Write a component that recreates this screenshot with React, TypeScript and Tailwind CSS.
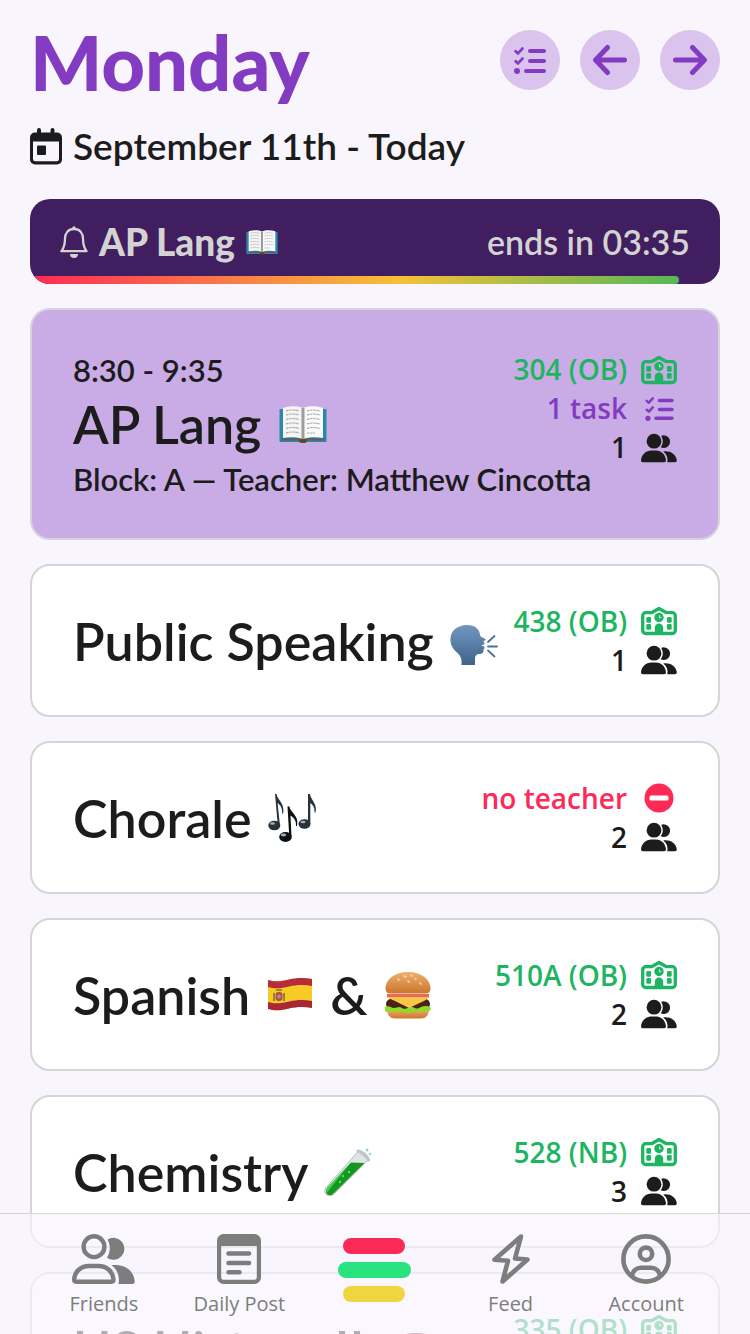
import React from "react";

type IconProps = { className?: string };

const HEAD = "font-['Lato','Liberation_Sans',sans-serif]";
const BODY = "font-['Open_Sans','Liberation_Sans',sans-serif]";

/* ---------- line icons ---------- */

function TasksIcon({ className }: IconProps) {
  return (
    <svg viewBox="0 0 32 27" fill="none" stroke="currentColor" strokeLinecap="round" strokeLinejoin="round" className={className} aria-hidden="true">
      <path d="M1.6 4.3 4 6.4 8.4 1.6M1.6 14.3 4 16.4 8.4 11.6" strokeWidth="2.8" />
      <path d="M16 4h14M16 14h14M12 24h18" strokeWidth="4" />
      <circle cx="3" cy="24" r="3" fill="currentColor" stroke="none" />
    </svg>
  );
}

function ArrowIcon({ className }: IconProps) {
  return (
    <svg viewBox="0 0 36 32" fill="none" stroke="currentColor" strokeWidth="5" strokeLinecap="round" strokeLinejoin="round" className={className} aria-hidden="true">
      <path d="M15.500 3.500 3.600 16 15.500 28.500M3.600 16H32.500" />
    </svg>
  );
}

function BellIcon({ className }: IconProps) {
  return (
    <svg viewBox="0 0 28 32" fill="none" stroke="currentColor" className={className} aria-hidden="true">
      <path d="M14 3C8 3 5 7.500 5 12.500c0 6-1 9.500-3.600 12.700h25.200C24 22 23 18.500 23 12.500 23 7.500 20 3 14 3Z" strokeWidth="2.300" strokeLinejoin="round" />
      <path d="M12.200 3.500V2a1.800 1.800 0 0 1 3.600 0v1.500ZM10 28h8a4 4 0 0 1-8 0Z" fill="currentColor" stroke="none" />
    </svg>
  );
}

function CalendarIcon({ className }: IconProps) {
  return (
    <svg viewBox="0 0 32 37" fill="currentColor" className={className} aria-hidden="true">
      <path fillRule="evenodd" d="M7 2a2 2 0 0 1 4 0v2.600h9.500V2a2 2 0 0 1 4 0v2.600H27a5 5 0 0 1 5 5v21.800a5 5 0 0 1-5 5H5a5 5 0 0 1-5-5V9.600a5 5 0 0 1 5-5h2ZM3 13.500V31a2.300 2.300 0 0 0 2.300 2.300h21.400A2.300 2.300 0 0 0 29 31V13.500Z" />
      <rect x="7" y="17.500" width="9" height="9.500" rx="1" />
    </svg>
  );
}

function SchoolIcon({ className }: IconProps) {
  return (
    <svg viewBox="0 0 36 30" fill="none" className={className} aria-hidden="true">
      <path d="M4.700 6.700h5.800L18 2.500l7.500 4.200h5.800a3 3 0 0 1 3 3V24.500a3 3 0 0 1-3 3H4.700a3 3 0 0 1-3-3V9.700a3 3 0 0 1 3-3Z" stroke="currentColor" strokeWidth="3.300" strokeLinejoin="round" />
      <g fill="currentColor">
        <rect x="5.300" y="11" width="4.800" height="5.800" rx="1.400" />
        <rect x="5.300" y="18" width="4.800" height="5.800" rx="1.400" />
        <rect x="25.900" y="11" width="4.800" height="5.800" rx="1.400" />
        <rect x="25.900" y="18" width="4.800" height="5.800" rx="1.400" />
        <circle cx="18" cy="11.500" r="4.700" />
        <path d="M13.800 28v-6.200a4.200 4.200 0 0 1 8.400 0V28Z" />
      </g>
      <path d="M18.500 9.300v2.300h1.900" stroke="white" strokeOpacity=".65" strokeWidth="1.200" />
    </svg>
  );
}

function PeopleIcon({ className }: IconProps) {
  return (
    <svg viewBox="0 0 36 30" fill="currentColor" className={className} aria-hidden="true">
      <circle cx="13" cy="8.200" r="7.400" />
      <path d="M20.200 2.900a6.300 6.300 0 1 1-.5 11.300c2.600-3.300 2.800-7.600.5-11.300Z" />
      <path d="M0 27.300C.5 21.500 5 17.500 10.500 17.500h4.500c5.500 0 9.500 4.300 10 9.800 0 1.300-.7 1.900-1.800 1.900H1.800C.7 29.200 0 28.600 0 27.300Z" />
      <path d="M22.300 18.400c6.500-1 12.800 2.500 13.500 8.900 0 1.200-.6 1.900-1.800 1.900h-7.700c.9-4.400-.5-8.100-4-10.800Z" />
    </svg>
  );
}

function NoEntryIcon({ className }: IconProps) {
  return (
    <svg viewBox="0 0 30 30" className={className} aria-hidden="true">
      <circle cx="15" cy="15" r="14.500" fill="currentColor" />
      <rect x="5.500" y="12.500" width="19" height="5" rx="1.500" fill="white" />
    </svg>
  );
}

function FriendsIcon({ className }: IconProps) {
  return (
    <svg viewBox="0 0 63 50" fill="none" className={className} aria-hidden="true">
      <g stroke="currentColor" strokeWidth="4.400">
        <circle cx="22" cy="12.700" r="10.400" />
        <path d="M2.200 45.500C2.500 37.500 9 32 17 32h9.500c8 0 14.500 5.500 15 13.500q0 2.200-2 2.200H4.200q-2 0-2-2.200Z" />
      </g>
      <g fill="currentColor">
        <path d="M35.500 5.500a11 11 0 1 1-.500 18.200c3.500-5.500 3.800-12.500.5-18.200Z" />
        <path d="M39.500 31.300C52 30 62 36 62.700 47.300c0 1.800-.7 2.700-2.400 2.700H46.500c1.400-7.500-1-14.500-7-18.700Z" />
      </g>
    </svg>
  );
}

function PostIcon({ className }: IconProps) {
  return (
    <svg viewBox="0 0 44 50" fill="none" stroke="currentColor" strokeLinecap="round" className={className} aria-hidden="true">
      <rect x="2.100" y="2.100" width="39.800" height="45.800" rx="4.500" strokeWidth="4.200" />
      <path d="M2 12V6q0-5 5-5h30q5 0 5 5v6Z" fill="currentColor" stroke="none" />
      <path d="M11.500 19.500h20.500M11.500 29h20.500M11.500 38.300h11" strokeWidth="4.600" />
    </svg>
  );
}

function FeedIcon({ className }: IconProps) {
  return (
    <svg viewBox="0 0 38 50" fill="none" stroke="currentColor" strokeWidth="4.600" strokeLinejoin="round" className={className} aria-hidden="true">
      <path d="M29 2.500 2.500 25.800l13.500 1L10.500 47.500 35.500 25.500 23 24.500Z" />
    </svg>
  );
}

function AccountIcon({ className }: IconProps) {
  return (
    <svg viewBox="0 0 50 50" fill="none" stroke="currentColor" strokeWidth="4.600" className={className} aria-hidden="true">
      <circle cx="25" cy="25" r="22.600" />
      <circle cx="25" cy="19.800" r="6.200" />
      <path d="M11 42.500c.5-5.500 4.500-8.800 9-8.800h10c4.500 0 8.500 3.300 9 8.800" />
    </svg>
  );
}

function BarsLogo({ className }: IconProps) {
  return (
    <svg viewBox="0 0 73 64" className={className} aria-hidden="true">
      <rect x="5" y="0" width="62" height="16" rx="8" fill="#fd2a57" />
      <rect x="0" y="24" width="73" height="16" rx="8" fill="#29e37f" />
      <rect x="5" y="48" width="62" height="16" rx="8" fill="#efd640" />
    </svg>
  );
}

/* ---------- emoji drawings ---------- */

function Book({ className }: IconProps) {
  return (
    <svg viewBox="0 0 48 48" className={className} role="img" aria-label="open book">
      <rect x=".5" y="9" width="47" height="33" rx="1" fill="#2b87a8" />
      <path d="M3 38h42v2.500H27l-3 1.500-3-1.500H3Z" fill="#5d6165" />
      <path d="M4 8C11 5.500 19 6 24 8v31c-5-2-13-2.500-20-1Z" fill="#f4f4f4" />
      <path d="M44 8C37 5.500 29 6 24 8v31c5-2 13-2.500 20-1Z" fill="#fafafa" />
      <path d="M22.500 8h3v31h-3Z" fill="#999da0" />
      <path d="M7 11q7-2 13 0M7 15q7-2 13 0M7 19.500q7-2 13 0M7 24q7-2 13 0M7 28.500q7-2 13 0M7 33q7-2 13 0M28 11q6-2 13 0M28 15q6-2 13 0M28 19.500q6-2 13 0M28 24q6-2 13 0M28 28.500q6-2 13 0M28 33h8" stroke="#aaa" strokeWidth="1.100" strokeDasharray="2.500 .6" fill="none" />
      <ellipse cx="24" cy="41" rx="4" ry="2" fill="#594b22" />
    </svg>
  );
}

function SpeakingHead({ className }: IconProps) {
  return (
    <svg viewBox="0 0 48 48" className={className} role="img" aria-label="speaking head">
      <defs>
        <linearGradient id="head" x1="0" y1="0" x2="0" y2="1">
          <stop offset="0" stopColor="#7197c1" />
          <stop offset="1" stopColor="#3f638a" />
        </linearGradient>
      </defs>
      <path d="M17 8c8 0 12.500 4 13 10 .3 2 4 3 5.500 4 .5 1-1 1.800-2 2.200.8 1.300 1 2.300.8 3.300l-3 .8 3.200 1.500c0 2-.5 2.200-1 2.700.5 3-1.500 4.500-4 4.500-3 0-4.500 1.500-4.500 4.500V48H11.500c.5-6-.5-9-5-13C2.500 31.500 0 27 .5 21 1 13 8.500 8 17 8Z" fill="url(#head)" />
      <path d="m38 25 6.500-6M38 29.500h9M38 33.500l6.500 6" stroke="#4b7299" strokeWidth="1.800" strokeLinecap="round" />
    </svg>
  );
}

function Notes({ className }: IconProps) {
  return (
    <svg viewBox="0 0 48 48" className={className} role="img" aria-label="musical notes">
      <g fill="#26323c">
        <ellipse cx="6.300" cy="31.500" rx="6" ry="4.800" />
        <path d="M7 0h1.600c.5 6 8.500 9 6.500 19.500h-1c.3-6-2-8.500-4.500-10.500L12 32H9.900Z" />
        <ellipse cx="36.500" cy="30" rx="6" ry="4.800" />
        <path d="M40 0h2c.5 6 7.500 9 5.500 18.500h-1c.3-5-1.500-7.500-4.200-9.500V30h-2.300Z" />
      </g>
      <g fill="#0d1114">
        <ellipse cx="17.500" cy="43" rx="6.300" ry="4.900" />
        <path d="M19.500 12.500h2c.5 6 10 9 7.500 19.500h-1c.3-6-2.500-8.500-5.500-10.500L23.500 43h-2.200Z" />
      </g>
      <g fill="#a3b0b9">
        <ellipse cx="4.500" cy="29.500" rx="2.500" ry="1.300" />
        <ellipse cx="35" cy="28" rx="2.500" ry="1.300" />
        <ellipse cx="15.500" cy="41" rx="2.800" ry="1.400" />
      </g>
    </svg>
  );
}

function SpainFlag({ className }: IconProps) {
  return (
    <svg viewBox="0 0 48 48" className={className} role="img" aria-label="flag of Spain">
      <path d="M2 9c8 2.500 14 1 21-.5s14.500-2 23-.5v29c-8-1.500-16-1-23 .5S10 40.500 2 38Z" fill="#f6cb25" />
      <path d="M2 9c8 2.500 14 1 21-.5s14.500-2 23-.5v7c-8-1.500-16-1-23 .5S10 18.500 2 16Z" fill="#b82b3b" />
      <path d="M2 31c8 2.500 14 1 21-.5s14.500-2 23-.5v7c-8-1.500-16-1-23 .5S10 40.500 2 38Z" fill="#a92737" />
      <rect x="9.500" y="21" width="7" height="9" rx="3" fill="#b4513c" />
      <path d="M10 19h6M8 22v8M18 22v8" stroke="#8c6a4b" strokeWidth="1.600" />
      <circle cx="13" cy="25.500" r="2" fill="#a98ba2" />
    </svg>
  );
}

function UsaFlag({ className }: IconProps) {
  return (
    <svg viewBox="0 0 48 48" className={className} role="img" aria-label="flag of the United States">
      <path d="M1 10c8 2.500 15 1 22-.5s15-2 23-.5v29c-8-1.500-16-1-23 .5S9 41.500 1 39Z" fill="#fff" />
      <path d="M1 11.500c8 2.500 15 1 22-.5s15-2 23-.5M1 18c8 2.500 15 1 22-.5s15-2 23-.5M1 24.500c8 2.500 15 1 22-.5s15-2 23-.5M1 31c8 2.500 15 1 22-.5s15-2 23-.5M1 37.500c8 2.500 15 1 22-.5s15-2 23-.5" fill="none" stroke="#c1283e" strokeWidth="3" />
      <path d="M1 13c8 2 14 1 20-.5V26c-6 1.500-12 2-20 .5Z" fill="#3c4a86" />
    </svg>
  );
}

function Burger({ className }: IconProps) {
  return (
    <svg viewBox="0 0 48 48" className={className} role="img" aria-label="hamburger">
      <defs>
        <linearGradient id="bun" x1="0" y1="0" x2="0" y2="1">
          <stop offset="0" stopColor="#eeb071" />
          <stop offset="1" stopColor="#cc752b" />
        </linearGradient>
      </defs>
      <path d="M3 38h42c0 6.500-3.500 9.500-8 9.500H11C6.500 47.500 3 44.500 3 38Z" fill="url(#bun)" />
      <rect x="2" y="28" width="44" height="10" rx="5" fill="#4a2517" />
      <path d="M1 36c4-2 6 1 9 1s5-2 8 0 5 0 8-1 5 3 9 1 6-3 11-1c2 2 .5 4-2 4-4-1-4 2-8 1s-4-1-7 0-5 2-9 0-6 1-9 0-8 1-10-1Z" fill="#8fdb28" />
      <path d="M3 23h42v3H3Z" fill="#ef665a" />
      <path d="M2 26h44l-6 4-15 7-14-7Z" fill="#fac64a" />
      <path d="M1.500 18C1.500 8 11 1 24 1s22.500 7 22.500 17c0 3-2 4.500-5 4.500h-35c-3 0-5-1.500-5-4.500Z" fill="url(#bun)" />
      <path d="m20 5 2 1M27 4l1 1M14 8l1 1M31 8h1M24 10l1 1M36 12l1 1" stroke="#f9dfa8" strokeWidth="1.600" strokeLinecap="round" />
    </svg>
  );
}

function TestTube({ className }: IconProps) {
  return (
    <svg viewBox="0 0 48 48" className={className} role="img" aria-label="test tube">
      <path d="m34 3.500 10 8.500L9.500 46.500C7 48.500 4 48 2.200 46.500s-2-4.500-.2-7Z" fill="#dfe4e4" stroke="#a9b3b1" strokeWidth=".8" />
      <path d="m27 14.500 13.500.5L9 46c-2 1.500-4 1.500-5.500.5s-2-4-.3-6Z" fill="#14961f" />
      <path d="M27 14.500 3.200 39.500c-1.300 2-1.300 4 0 5Z" fill="#46c850" />
      <path d="M34 3c4 .5 9 4.500 10.500 9" fill="none" stroke="#bfc5c5" strokeWidth="3.200" strokeLinecap="round" />
      <g fill="#57e05c">
        <circle cx="19" cy="28" r="1.200" />
        <circle cx="25" cy="24" r="1.200" />
        <circle cx="16" cy="34" r="1.200" />
        <circle cx="43" cy="2" r="1.500" fill="#8fdf9b" />
        <circle cx="46" cy="6" r="1.200" fill="#8fdf9b" />
      </g>
    </svg>
  );
}

/* ---------- data ---------- */

type Status =
  | { kind: "room"; text: string }
  | { kind: "absent"; text: string };

type Lesson = {
  id: string;
  title: React.ReactNode;
  status: Status;
  friends: number;
};

const emoji = "size-12 shrink-0";

const lessons: Lesson[] = [
  { id: "speaking", title: <>Public Speaking <SpeakingHead className={emoji} /></>, status: { kind: "room", text: "438 (OB)" }, friends: 1 },
  { id: "chorale", title: <>Chorale <Notes className={emoji} /></>, status: { kind: "absent", text: "no teacher" }, friends: 2 },
  { id: "spanish", title: <>Spanish <SpainFlag className={emoji} /> &amp; <Burger className={emoji} /></>, status: { kind: "room", text: "510A (OB)" }, friends: 2 },
  { id: "chemistry", title: <>Chemistry <TestTube className={emoji} /></>, status: { kind: "room", text: "528 (NB)" }, friends: 3 },
  { id: "history", title: <>US History II <UsaFlag className={emoji} /></>, status: { kind: "room", text: "335 (OB)" }, friends: 2 },
];

const navItems = [
  { label: "Friends", icon: <FriendsIcon className="h-[50px] w-[63px]" /> },
  { label: "Daily Post", icon: <PostIcon className="h-[50px] w-11" /> },
  { label: "", icon: <BarsLogo className="mt-1 h-16 w-[73px]" /> },
  { label: "Feed", icon: <FeedIcon className="h-[50px] w-[38px]" /> },
  { label: "Account", icon: <AccountIcon className="size-[50px]" /> },
];

/* ---------- pieces ---------- */

function InfoRow({ color, text, icon }: { color: string; text: React.ReactNode; icon: React.ReactNode }) {
  return (
    <div className={`flex h-[39px] items-center justify-end gap-[14px] ${color}`}>
      <span>{text}</span>
      <span className="flex w-9 justify-center">{icon}</span>
    </div>
  );
}

function RoomRow({ text }: { text: string }) {
  return <InfoRow color="text-[#1db561]" text={text} icon={<SchoolIcon className="h-[30px] w-9" />} />;
}

function FriendsRow({ count }: { count: number }) {
  return <InfoRow color="text-[#1c1c1c]" text={count} icon={<PeopleIcon className="h-[30px] w-9" />} />;
}

function LessonCard({ lesson }: { lesson: Lesson }) {
  return (
    <article className="flex h-[153px] shrink-0 items-center justify-between rounded-[20px] border-2 border-[#d5d4d8] bg-white px-[41px]">
      <h2 className={`flex items-center gap-4 whitespace-nowrap text-[52px] leading-[60px] font-semibold ${HEAD}`}>{lesson.title}</h2>
      <div className="shrink-0 whitespace-nowrap text-[28px] leading-[39px] font-semibold">
        {lesson.status.kind === "room" ? (
          <RoomRow text={lesson.status.text} />
        ) : (
          <InfoRow color="text-[#fd2a57]" text={lesson.status.text} icon={<NoEntryIcon className="size-[30px]" />} />
        )}
        <FriendsRow count={lesson.friends} />
      </div>
    </article>
  );
}

const roundButton = "flex size-[60px] items-center justify-center rounded-full bg-[#dac3ec] text-[#823bc1]";

export default function App() {
  return (
    <div className={`relative h-screen overflow-hidden bg-[#f8f5fd] text-[#1c1c1c] ${BODY}`}>
      <main className="flex h-full flex-col overflow-y-auto px-[30px] pt-[30px] pb-36 [scrollbar-width:none]">
        <header className="flex shrink-0 items-start justify-between">
          <h1 className={`text-[76px] leading-[64px] font-black text-[#823bc1] ${HEAD}`}>Monday</h1>
          <div className="flex gap-5">
            <button type="button" aria-label="Tasks" className={roundButton}>
              <TasksIcon className="h-[27px] w-8" />
            </button>
            <button type="button" aria-label="Previous day" className={roundButton}>
              <ArrowIcon className="h-8 w-9" />
            </button>
            <button type="button" aria-label="Next day" className={roundButton}>
              <ArrowIcon className="h-8 w-9 rotate-180" />
            </button>
          </div>
        </header>

        <p className={`mt-[30px] flex shrink-0 items-center gap-[11px] text-[37px] leading-[44px] font-semibold ${HEAD}`}>
          <CalendarIcon className="h-[37px] w-8" />
          September 11th - Today
        </p>

        <section className={`mt-[31px] shrink-0 overflow-hidden rounded-[20px] bg-[#411e5f] text-[#d3d3d3] ${HEAD}`}>
          <div className="flex items-center justify-between px-[30px] pt-[22px] pb-[13px] leading-[42px]">
            <div className="flex items-center gap-[11px] text-[37px] font-black">
              <BellIcon className="h-8 w-7" />
              AP Lang
              <Book className="size-8" />
            </div>
            <span className="text-[34px] font-semibold">ends in 03:35</span>
          </div>
          <div className="h-2 w-[94%] rounded-r-full bg-[linear-gradient(90deg,#fd2a57,#f5c138_57%,#55b757)]" />
        </section>

        <div className="mt-6 flex shrink-0 flex-col gap-6">
          <article className="flex items-start justify-between rounded-[20px] border-2 border-[#d5d4d8] bg-[#c9abe5] px-[41px] py-10">
            <div className={`w-0 flex-1 whitespace-nowrap font-semibold ${HEAD}`}>
              <p className="text-[31px] leading-10">8:30 - 9:35</p>
              <h2 className="mt-1 flex items-center gap-[18px] text-[52px] leading-[60px]">
                AP Lang <Book className={emoji} />
              </h2>
              <p className="mt-1.5 text-[31px] leading-[38px]">Block: A — Teacher: Matthew Cincotta</p>
            </div>
            <div className="shrink-0 whitespace-nowrap text-[28px] leading-[39px] font-semibold">
              <RoomRow text="304 (OB)" />
              <InfoRow color="text-[#823bc1]" text="1 task" icon={<TasksIcon className="h-6 w-[29px]" />} />
              <FriendsRow count={1} />
            </div>
          </article>
          {lessons.map((lesson) => (
            <LessonCard key={lesson.id} lesson={lesson} />
          ))}
        </div>
      </main>

      <nav className="absolute inset-x-0 bottom-0 grid grid-cols-5 border-t border-[#d5d4d8] bg-[#f8f4fd]/[.67] px-9 pt-5 pb-4 text-[#7d7d7d]">
        {navItems.map((item) => (
          <a key={item.label} href="#" aria-label={item.label || "Schedule"} className="flex flex-col items-center gap-[6px] whitespace-nowrap text-[20px] leading-7 font-medium">
            {item.icon}
            {item.label && <span>{item.label}</span>}
          </a>
        ))}
      </nav>
    </div>
  );
}
